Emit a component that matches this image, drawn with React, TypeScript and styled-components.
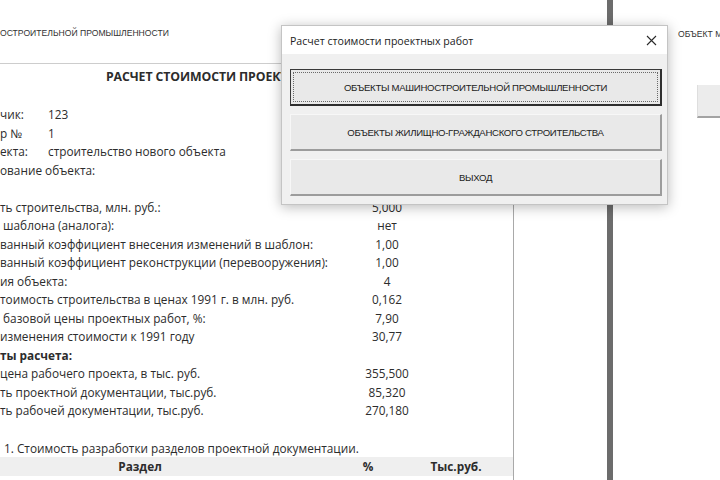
import React from 'react'
import styled, { createGlobalStyle } from 'styled-components'

const GlobalStyle = createGlobalStyle`
  html, body {
    margin: 0;
    padding: 0;
    background: #fff;
  }
  body {
    font-family: "Open Sans", "Liberation Sans", sans-serif;
    color: #2c2c2c;
  }
`

type Row =
  | { kind: 'title' }
  | { kind: 'blank' }
  | { kind: 'short'; label: string; value: string }
  | { kind: 'long'; label: string; value?: string; bold?: boolean }
  | { kind: 'caption'; label: string }
  | { kind: 'head' }

const rows: Row[] = [
  { kind: 'title' },
  { kind: 'blank' },
  { kind: 'short', label: 'чик:', value: '123' },
  { kind: 'short', label: 'р №', value: '1' },
  { kind: 'short', label: 'екта:', value: 'строительство нового объекта' },
  { kind: 'long', label: 'ование объекта:' },
  { kind: 'blank' },
  { kind: 'long', label: 'ть строительства, млн. руб.:', value: '5,000' },
  { kind: 'long', label: ' шаблона (аналога):', value: 'нет' },
  { kind: 'long', label: 'ванный коэффициент внесения изменений в шаблон:', value: '1,00' },
  { kind: 'long', label: 'ванный коэффициент реконструкции (перевооружения):', value: '1,00' },
  { kind: 'long', label: 'ия объекта:', value: '4' },
  { kind: 'long', label: 'тоимость строительства в ценах 1991 г. в млн. руб.', value: '0,162' },
  { kind: 'long', label: ' базовой цены проектных работ, %:', value: '7,90' },
  { kind: 'long', label: 'изменения стоимости к 1991 году', value: '30,77' },
  { kind: 'long', label: 'ты расчета:', bold: true },
  { kind: 'long', label: 'цена рабочего проекта, в тыс. руб.', value: '355,500' },
  { kind: 'long', label: 'ть проектной документации, тыс.руб.', value: '85,320' },
  { kind: 'long', label: 'ть рабочей документации, тыс.руб.', value: '270,180' },
  { kind: 'blank' },
  { kind: 'caption', label: '1. Стоимость разработки разделов проектной документации.' },
  { kind: 'head' },
]

const buttons = [
  { text: 'ОБЪЕКТЫ МАШИНОСТРОИТЕЛЬНОЙ ПРОМЫШЛЕННОСТИ', focused: true },
  { text: 'ОБЪЕКТЫ ЖИЛИЩНО-ГРАЖДАНСКОГО СТРОИТЕЛЬСТВА', focused: false },
  { text: 'ВЫХОД', focused: false },
]

export default function App() {
  return (
    <>
      <GlobalStyle />
      <Screen>
        <LeftPane>
          <SheetHeader>ОСТРОИТЕЛЬНОЙ ПРОМЫШЛЕННОСТИ</SheetHeader>
          <SheetBody>
            {rows.map((r, i) => {
              if (r.kind === 'title') return <TitleRow key={i}>РАСЧЕТ СТОИМОСТИ ПРОЕКТНЫХ РАБОТ</TitleRow>
              if (r.kind === 'blank') return <BlankRow key={i} />
              if (r.kind === 'caption') return <CaptionRow key={i}>{r.label}</CaptionRow>
              if (r.kind === 'head')
                return (
                  <HeadRow key={i}>
                    <HeadCell $col={1}>Раздел</HeadCell>
                    <HeadCell $col={3}>%</HeadCell>
                    <HeadCell $col={4}>Тыс.руб.</HeadCell>
                  </HeadRow>
                )
              if (r.kind === 'short')
                return (
                  <ShortRow key={i}>
                    <Label>{r.label}</Label>
                    <span>{r.value}</span>
                  </ShortRow>
                )
              return (
                <LongRow key={i} $bold={r.bold}>
                  <Label>{r.label}</Label>
                  <Value>{r.value}</Value>
                </LongRow>
              )
            })}
          </SheetBody>
        </LeftPane>
        <MiddlePane />
        <DarkBar />
        <RightPane>
          <RightHeader>ОБЪЕКТ М</RightHeader>
          <SheetButton />
        </RightPane>

        <Dialog>
          <TitleBar>
            <span>Расчет стоимости проектных работ</span>
            <svg width="11" height="11" viewBox="0 0 11 11">
              <path d="M1 1 L10 10 M10 1 L1 10" stroke="#2a2a2a" strokeWidth="1.1" fill="none" />
            </svg>
          </TitleBar>
          <DialogBody>
            {buttons.map((b) => (
              <DlgButton key={b.text} $focused={b.focused}>
                {b.text}
              </DlgButton>
            ))}
          </DialogBody>
        </Dialog>
      </Screen>
    </>
  )
}

const Screen = styled.div`
  position: relative;
  width: 720px;
  height: 480px;
  overflow: hidden;
  display: flex;
  background: #fff;
`

const LeftPane = styled.div`
  width: 514px;
  flex-shrink: 0;
  display: flex;
  flex-direction: column;
`

const SheetHeader = styled.div`
  height: 64px;
  border-bottom: 1px solid #cdcdcd;
  display: flex;
  align-items: center;
  padding-top: 3px;
  box-sizing: border-box;
  font-family: "Liberation Sans", sans-serif;
  font-size: 8.6px;
  color: #333;
  white-space: nowrap;
`

const SheetBody = styled.div`
  flex: 1;
  border-right: 1px solid #a9a9a9;
  padding-top: 4px;
  font-size: 11.8px;
  white-space: nowrap;
`

const BlankRow = styled.div`
  height: 18.5px;
`

const TitleRow = styled.div`
  height: 18.5px;
  line-height: 18.5px;
  padding-left: 106px;
  font-weight: 700;
  font-size: 12.3px;
  letter-spacing: -0.1px;
`

const ShortRow = styled.div`
  height: 18.5px;
  line-height: 18.5px;
  display: grid;
  grid-template-columns: 48px 1fr;
`

const LongRow = styled.div<{ $bold?: boolean }>`
  height: 18.5px;
  line-height: 18.5px;
  display: grid;
  grid-template-columns: 347px 80px;
  font-weight: ${(p) => (p.$bold ? 700 : 400)};
`

const Label = styled.span`
  white-space: pre;
`

const Value = styled.span`
  text-align: center;
`

const CaptionRow = styled.div`
  height: 18.5px;
  line-height: 18.5px;
  padding: 1px 0 0 4px;
  box-sizing: border-box;
`

const HeadRow = styled.div`
  height: 19px;
  line-height: 19px;
  background: #efefef;
  display: grid;
  grid-template-columns: 280px 44px 88px 88px;
  font-weight: 700;
`

const HeadCell = styled.span<{ $col: number }>`
  grid-column: ${(p) => p.$col};
  text-align: center;
`

const MiddlePane = styled.div`
  width: 93px;
  flex-shrink: 0;
`

const DarkBar = styled.div`
  width: 6px;
  flex-shrink: 0;
  background: #6c6c6c;
`

const RightPane = styled.div`
  flex: 1;
  display: flex;
  flex-direction: column;
  min-width: 0;
`

const RightHeader = styled.div`
  height: 64px;
  display: flex;
  align-items: center;
  padding: 3px 0 0 65px;
  box-sizing: border-box;
  font-family: "Liberation Sans", sans-serif;
  font-size: 8.6px;
  color: #333;
  white-space: nowrap;
`

const SheetButton = styled.div`
  margin: 21px 0 0 84px;
  height: 33px;
  background: #ececec;
  border-left: 1px solid #dedede;
  border-bottom: 2px solid #a3a3a3;
  box-sizing: border-box;
`

const Dialog = styled.div`
  position: absolute;
  left: 281px;
  top: 25px;
  width: 387px;
  height: 180px;
  box-sizing: border-box;
  background: #f0f0f0;
  border: 1px solid #c4c4c4;
  box-shadow: 0 2px 12px rgba(0, 0, 0, 0.28);
  display: flex;
  flex-direction: column;
`

const TitleBar = styled.div`
  height: 28px;
  flex-shrink: 0;
  background: #fff;
  display: flex;
  align-items: center;
  justify-content: space-between;
  padding: 1px 10px 0 8px;
  box-sizing: border-box;
  font-size: 10.6px;
  color: #222;
`

const DialogBody = styled.div`
  padding: 15px 5px 0 8px;
  display: flex;
  flex-direction: column;
  gap: 8px;
`

const DlgButton = styled.div<{ $focused?: boolean }>`
  position: relative;
  height: 37px;
  box-sizing: border-box;
  display: flex;
  align-items: center;
  justify-content: center;
  background: #e9e9e9;
  font-family: "Liberation Sans", sans-serif;
  font-size: 9.6px;
  letter-spacing: -0.3px;
  color: #222;
  border-style: solid;
  border-width: 1px 2px 2px 1px;
  border-color: ${(p) =>
    p.$focused ? '#3a3a3a #2e2e2e #2e2e2e #3a3a3a' : '#f7f7f7 #9c9c9c #9c9c9c #f7f7f7'};
  &::after {
    content: '';
    display: ${(p) => (p.$focused ? 'block' : 'none')};
    position: absolute;
    inset: 2px;
    border: 1px dotted #6a6a6a;
  }
`
